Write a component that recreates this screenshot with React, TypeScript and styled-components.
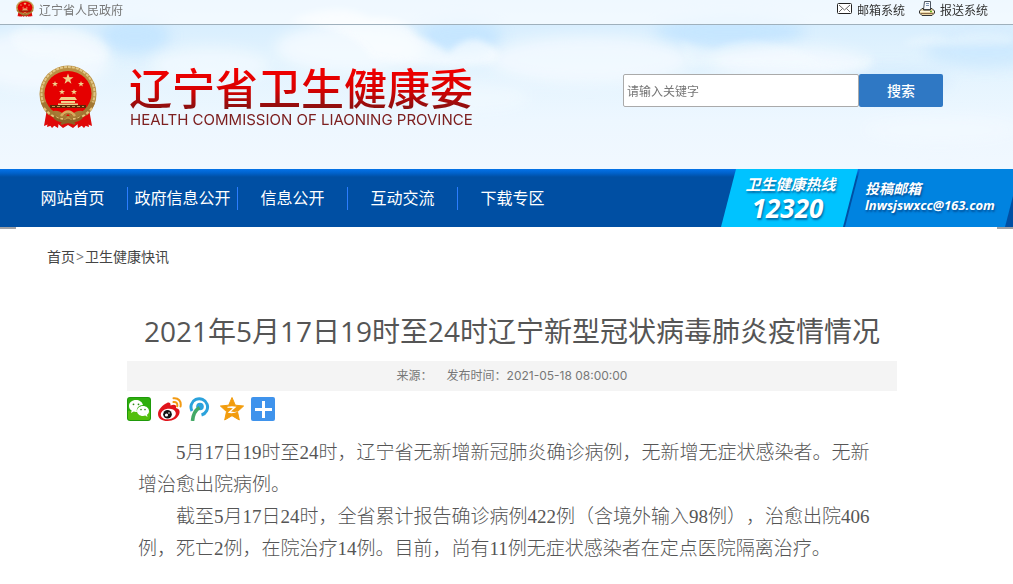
import React from "react";
import styled, { createGlobalStyle } from "styled-components";

const GlobalStyle = createGlobalStyle`
  *, *::before, *::after { box-sizing: border-box; }
  body {
    margin: 0;
    background: #fff;
    color: #444;
    font-family: "Open Sans", "Noto Sans CJK SC", sans-serif;
    font-size: 12px;
    text-spacing-trim: space-all;
  }
  a { color: inherit; text-decoration: none; }
`;

const Header = styled.header`
  position: relative;
  isolation: isolate;
  background: linear-gradient(#d2ebfe 0, #e2f3fe 60px, #edf7ff 120px, #f1f8ff 100%);
`;

const Sky = styled.svg`
  position: absolute;
  inset: 0;
  width: 100%;
  height: 100%;
  z-index: -1;
`;

const TopBar = styled.div`
  display: flex;
  justify-content: space-between;
  height: 25px;
  padding: 0 25px 0 16px;
  border-bottom: 1px solid #9fb0bc;
  background: rgba(255, 255, 255, 0.65);
`;

const TopGroup = styled.div`
  display: flex;
  gap: 14px;
`;

const TopLink = styled.a<{ $tone?: string }>`
  display: flex;
  gap: 5px;
  height: 22px;
  line-height: 22px;
  color: ${(p) => p.$tone || "#333"};
`;

const IconBox = styled.span<{ $top: number }>`
  display: flex;
  align-items: flex-start;
  padding-top: ${(p) => p.$top}px;
`;

const Masthead = styled.div`
  display: flex;
  justify-content: space-between;
  align-items: flex-start;
  height: 144px;
  padding: 40px 70px 0 39px;
`;

const Brand = styled.a`
  display: flex;
  gap: 32px;
`;

const BrandText = styled.span`
  display: flex;
  flex-direction: column;
`;

const BrandName = styled.span`
  font-size: 43px;
  line-height: 48px;
  font-weight: 500;
  color: transparent;
  background: linear-gradient(#f00000 10%, #d90000 50%, #8a1010 90%);
  background-clip: text;
  -webkit-background-clip: text;
`;

const BrandSub = styled.span`
  font-family: Inter, "Liberation Sans", sans-serif;
  padding-left: 1px;
  font-size: 15px;
  line-height: 14px;
  color: #7d2020;
`;

const SearchForm = styled.form`
  display: flex;
  margin-top: 9px;
`;

const SearchInput = styled.input`
  width: 236px;
  height: 33px;
  padding: 2px 3px 0;
  border: 1px solid #aaa;
  border-radius: 2px;
  background: #fff;
  font: inherit;
  color: #333;
  &::placeholder { color: #757575; opacity: 1; }
`;

const SearchButton = styled.button`
  width: 84px;
  height: 33px;
  padding: 0 0 2px;
  border: 0;
  border-radius: 2px;
  background: #2f78c4;
  color: #fff;
  font: inherit;
  font-size: 14px;
  font-weight: 500;
`;

const NavBar = styled.nav`
  display: flex;
  justify-content: space-between;
  height: 58px;
  padding-left: 17px;
  overflow: hidden;
  background: linear-gradient(#0573e8 0, #0062cc 4px, #004fa3 8px, #004fa3 100%);
`;

const NavList = styled.ul`
  display: flex;
  align-items: center;
  margin: 0;
  padding: 0;
  list-style: none;
`;

const NavItem = styled.li`
  width: 110px;
  height: 23px;
  border-left: 1px solid #2b7dff;
  line-height: 23px;
  font-size: 16px;
  text-align: center;
  white-space: nowrap;
  color: #fff;
  &:first-child { border-left-color: transparent; }
`;

const Contacts = styled.div`
  display: flex;
  margin-right: -7px;
  color: #fff;
  font-weight: 700;
  font-style: italic;
  white-space: nowrap;
  text-shadow: 1px 2px 2px rgba(0, 50, 110, 0.6);
`;

const Slant = styled.div<{ $bg: string; $width: number }>`
  display: flex;
  flex-direction: column;
  width: ${(p) => p.$width}px;
  background: ${(p) => p.$bg};
  clip-path: polygon(15px 0, 100% 0, calc(100% - 15px) 100%, 0 100%);
`;

const Hotline = styled(Slant)`
  padding: 5px 4px 0 0;
  align-items: center;
`;

const Mailbox = styled(Slant)`
  margin-left: -13px;
  padding: 11px 0 0 20px;
`;

const HotlineLabel = styled.span`
  padding-left: 6px;
  font-size: 15px;
  line-height: 20px;
`;

const HotlineNumber = styled.span`
  font-size: 26px;
  line-height: 28px;
`;

const MailLine = styled.span<{ $size: number }>`
  font-size: ${(p) => p.$size}px;
  line-height: 17px;
`;

const NavEdge = styled.div`
  display: flex;
  justify-content: space-between;
  height: 2px;
  &::before, &::after {
    content: "";
    width: 16px;
    background: #a0a2a6;
  }
`;

const Page = styled.main`
  padding: 18px 5px 16px 16px;
`;

const Breadcrumb = styled.nav`
  padding-left: 31px;
  font-size: 14px;
  line-height: 20px;
`;

const Crumb = styled.span`
  padding: 0 1px;
  color: #777;
`;

const Article = styled.article`
  max-width: 770px;
  margin: 44px auto 0;
`;

const Title = styled.h1`
  margin: 0 0 10px;
  font-size: 28px;
  font-weight: 400;
  line-height: 40px;
  text-align: center;
  color: #555;
`;

const Meta = styled.div`
  display: flex;
  justify-content: center;
  gap: 14px;
  background: #f4f4f4;
  color: #777;
  font-family: Inter, "Noto Sans CJK SC", sans-serif;
  line-height: 30px;
`;

const Share = styled.div`
  display: flex;
  gap: 7px;
  margin: 6px 0 16px;
`;

const ShareLink = styled.a`
  display: flex;
  width: 24px;
  height: 24px;
`;

const Paragraph = styled.p`
  margin: 0;
  padding: 0 11px;
  font-family: "Liberation Serif", "Noto Sans CJK SC", serif;
  font-size: 19px;
  font-weight: 300;
  line-height: 32px;
  text-indent: 2em;
  color: #555;
`;

function Emblem({ width, height }: { width: number; height: number }) {
  const star = "M0-5 1.3-1.6 5-1.6 2 .7 3.1 4.3 0 2.1-3.1 4.3-2 .7-5-1.6-1.3-1.6Z";
  return (
    <svg width={width} height={height} viewBox="0 0 58 64" preserveAspectRatio="none" aria-hidden="true">
      <path d="M8 44 5 61 10 59 13 63 18 58 24 63 29 60 34 63 40 58 45 63 48 59 53 61 50 44Z" fill="#de0a0a" />
      <ellipse cx="29" cy="29" rx="28.5" ry="28.5" fill="#b99045" />
      <ellipse cx="29" cy="28.5" rx="26.5" ry="26.5" fill="none" stroke="#e2c684" strokeWidth="2" strokeDasharray="3 1" />
      <path d="M2 38Q9 55 24 56L29 51 34 56Q49 55 56 38L48 36H10Z" fill="#a27732" />
      <path d="M5 43Q14 54 24 54M53 43Q44 54 34 54" stroke="#e5c37a" strokeWidth="2" strokeDasharray="3 2" fill="none" />
      <ellipse cx="29" cy="28.5" rx="23.5" ry="22.5" fill="#e50000" />
      <g fill="#f0d18b">
        <path d={star} transform="translate(29 14) scale(1.1)" />
        <path d={star} transform="translate(16 19) scale(.6)" />
        <path d={star} transform="translate(42 19) scale(.6)" />
        <path d={star} transform="translate(23 27) scale(.6)" />
        <path d={star} transform="translate(35 27) scale(.6)" />
        <path d="M22 32H36L38 35H20ZM22 36H36V38H22ZM19 38.5H39V40H19Z" />
      </g>
      <path d="M11 40H47V43H11Z" fill="#5d2608" />
      <path d="M13 41.5H45" stroke="#c49a4c" strokeDasharray="3 2" />
      <path d="M14 46Q21 45 25 50 29 43 33 50 37 45 44 46L38 52 33 53 29 49 25 53 20 52Z" fill="#a77b36" />
      <path d="M22 51Q29 42 36 51" fill="none" stroke="#d6ac5e" strokeWidth="2.5" />
      <path d="M10 50 20 56 19 63 14 60 8 62ZM48 50 38 56 39 63 44 60 50 62Z" fill="#e00808" />
      <path d="M15 52Q21 58 29 55 37 58 43 52M22 59Q29 55 36 59" stroke="#8d6325" strokeWidth="2.5" fill="none" />
    </svg>
  );
}

function Clouds() {
  return (
    <Sky viewBox="0 0 1013 169" preserveAspectRatio="xMidYMin slice" aria-hidden="true">
      <defs>
        <filter id="soft" x="-30%" y="-30%" width="160%" height="160%">
          <feGaussianBlur stdDeviation="7" />
        </filter>
        <filter id="edge" x="-30%" y="-30%" width="160%" height="160%">
          <feGaussianBlur stdDeviation="3" />
        </filter>
      </defs>
      <g fill="#bfe3ff" filter="url(#soft)" opacity=".75">
        <ellipse cx="135" cy="36" rx="35" ry="18" />
        <ellipse cx="460" cy="36" rx="42" ry="17" />
        <ellipse cx="730" cy="32" rx="75" ry="16" />
        <ellipse cx="985" cy="52" rx="60" ry="16" opacity=".7" />
        <ellipse cx="890" cy="80" rx="60" ry="14" opacity=".5" />
      </g>
      <g fill="#f6fbff" filter="url(#soft)">
        <ellipse cx="40" cy="60" rx="70" ry="30" opacity=".7" />
        <ellipse cx="210" cy="65" rx="60" ry="18" opacity=".6" />
        <ellipse cx="350" cy="48" rx="75" ry="24" opacity=".8" />
        <ellipse cx="590" cy="60" rx="100" ry="24" opacity=".7" />
        <ellipse cx="790" cy="62" rx="80" ry="16" opacity=".7" />
        <ellipse cx="470" cy="98" rx="60" ry="14" opacity=".5" />
        <ellipse cx="940" cy="130" rx="80" ry="14" opacity=".5" />
      </g>
      <g fill="#fafdff" filter="url(#edge)" opacity=".65">
        <path d="M10 35Q28 20 45 30 70 22 90 35 112 42 108 58 80 70 50 58 18 62 10 35Z" opacity=".6" />
        <path d="M290 20Q340 0 370 18 405 15 416 36 440 45 448 54 470 28 494 48 506 55 490 64 440 70 370 58 360 32 290 20Z" />
        <path d="M680 40Q700 48 716 50 745 36 770 44 800 48 820 60 840 66 870 56 880 68 850 72 760 62 690 66Z" opacity=".5" />
        <path d="M900 44Q930 30 950 38 980 28 1013 36V44Q970 48 900 44Z" opacity=".5" />
      </g>
    </Sky>
  );
}

function MailIcon() {
  return (
    <svg width="15" height="11" viewBox="0 0 15 11" fill="none" aria-hidden="true">
      <rect x=".5" y=".5" width="14" height="10" rx="1" fill="#fff" stroke="#222" />
      <path d="M2 2 7.5 7 13 2M2 9 5.5 5.5M13 9 9.5 5.5" stroke="#666" />
    </svg>
  );
}

function PrinterIcon() {
  return (
    <svg width="16" height="15" viewBox="0 0 16 15" aria-hidden="true">
      <path d="M5.5.5H11.5V8.5H4.5Z" fill="#f6f9fd" stroke="#4d5661" />
      <path d="M7 2.5H10M7 4.5H10" stroke="#7b92b0" />
      <path d="M3 7.5H4.5V9H11.5V7.5H13L15.5 10V12L13 14.5H3L.5 12V10Z" fill="#ead7a6" stroke="#333" />
      <path d="M1 10.5H15" stroke="#fff8e0" />
      <path d="M2 12.5H14" stroke="#8c6a48" />
      <path d="M11 10.5H13" stroke="#5fae19" strokeWidth="1.6" />
    </svg>
  );
}

function WechatIcon() {
  return (
    <svg width="24" height="24" viewBox="0 0 24 24" aria-hidden="true">
      <rect width="24" height="24" rx="3" fill="#1f9a0a" />
      <rect x="1" y="1" width="22" height="22" rx="2" fill="#2fae0e" />
      <path d="M1 14H23V21Q23 23 21 23H3Q1 23 1 21Z" fill="#54bf0d" />
      <path d="M9 3C5 3 2 5.500 2 9c0 2 1 3.500 2.700 4.600L4 16l2.700-1.400q1.500.5 3.300.3C9 11 12 8 16 8 15.300 5 12.500 3 9 3Z" fill="#fff" />
      <path d="M16 9C12.500 9 10 11.200 10 14s2.600 5 6 5q1.200 0 2.300-.4L20.500 20l-.5-2.200C21.300 17 22 15.600 22 14 22 11.200 19.400 9 16 9Z" fill="#fff" />
      <g fill="#2d8a16">
        <circle cx="6.500" cy="7.300" r=".9" /><circle cx="11.500" cy="7.300" r=".9" />
        <circle cx="14" cy="12.600" r=".8" /><circle cx="18" cy="12.600" r=".8" />
      </g>
    </svg>
  );
}

function WeiboIcon() {
  return (
    <svg width="24" height="24" viewBox="0 0 24 24" aria-hidden="true">
      <path d="M9 6C11 5 13 6 12.500 8.500 16 7 19 7.500 18 11 21 11.500 22 13.500 21.500 16 20.500 21 15 24 9.500 24 4 24 0 21.500 0 17 0 12.500 5 7.500 9 6Z" fill="#e0141b" />
      <ellipse cx="10.300" cy="17" rx="7.600" ry="5.300" fill="#fff" transform="rotate(-8 10.300 17)" />
      <circle cx="9.500" cy="17.300" r="4.300" fill="#111" />
      <circle cx="8.500" cy="18" r="1.600" fill="#fff" />
      <circle cx="11" cy="16" r=".8" fill="#fff" />
      <path d="M15.500 1.200C20.500.6 23.600 4.500 22.500 9.500M15.500 5C18.300 4.600 19.800 6.600 19.200 9.300" fill="none" stroke="#f29a13" strokeWidth="2" strokeLinecap="round" />
    </svg>
  );
}

function TencentIcon() {
  return (
    <svg width="24" height="24" viewBox="0 0 24 24" fill="none" aria-hidden="true">
      <path d="M3 14A8.300 8.300 0 1 1 12.500 18" stroke="#2ba2dc" strokeWidth="3" />
      <circle cx="11" cy="9.500" r="3.800" fill="#2ba2dc" />
      <path d="M10.500 10.500C6.500 13 4 17.500 3.500 24" stroke="#43a866" strokeWidth="3.600" />
    </svg>
  );
}

function QzoneIcon() {
  return (
    <svg width="24" height="24" viewBox="0 0 24 24" aria-hidden="true">
      <path d="M12 .5 15.300 8.200 23.600 9 17.500 14.600 19.300 23 12 18.700 4.700 23 6.500 14.600.4 9 8.700 8.200Z" fill="#f29c0d" stroke="#f29c0d" strokeLinejoin="round" />
      <path d="M7.500 9.800Q12 8.800 16.500 9.800L11 14.600Q14 15.300 18 14.600 13 17.200 7.700 15.800L12.800 11.300Q10 10.600 7.500 10.900Z" fill="#fff" />
    </svg>
  );
}

function MoreIcon() {
  return (
    <svg width="24" height="24" viewBox="0 0 24 24" aria-hidden="true">
      <rect width="24" height="24" rx="2" fill="#3f93ec" />
      <path d="M12.500 4V11M12.500 14V21M4 12.500H11M14 12.500H21M11 12.500H14" stroke="#fff" strokeWidth="3" />
    </svg>
  );
}

const navItems = ["网站首页", "政府信息公开", "信息公开", "互动交流", "下载专区"];

const shareItems = [
  { label: "微信", Icon: WechatIcon },
  { label: "新浪微博", Icon: WeiboIcon },
  { label: "腾讯微博", Icon: TencentIcon },
  { label: "QQ空间", Icon: QzoneIcon },
  { label: "更多", Icon: MoreIcon },
];

export default function App() {
  return (
    <div lang="zh-CN">
      <GlobalStyle />
      <Header>
        <Clouds />
        <TopBar>
          <TopLink href="#" $tone="#777">
            <IconBox $top={0}><Emblem width={18} height={17} /></IconBox>
            辽宁省人民政府
          </TopLink>
          <TopGroup>
            <TopLink href="#"><IconBox $top={3}><MailIcon /></IconBox>邮箱系统</TopLink>
            <TopLink href="#"><IconBox $top={1}><PrinterIcon /></IconBox>报送系统</TopLink>
          </TopGroup>
        </TopBar>
        <Masthead>
          <Brand href="#">
            <Emblem width={58} height={64} />
            <BrandText>
              <BrandName>辽宁省卫生健康委</BrandName>
              <BrandSub>HEALTH COMMISSION OF LIAONING PROVINCE</BrandSub>
            </BrandText>
          </Brand>
          <SearchForm role="search" onSubmit={(e) => e.preventDefault()}>
            <SearchInput type="text" aria-label="请输入关键字" placeholder="请输入关键字" />
            <SearchButton type="submit">搜索</SearchButton>
          </SearchForm>
        </Masthead>
      </Header>
      <NavBar>
        <NavList>
          {navItems.map((name) => (
            <NavItem key={name}><a href="#">{name}</a></NavItem>
          ))}
        </NavList>
        <Contacts>
          <Hotline $bg="#00c3ff" $width={137}>
            <HotlineLabel>卫生健康热线</HotlineLabel>
            <HotlineNumber>12320</HotlineNumber>
          </Hotline>
          <Mailbox $bg="#0083e0" $width={175}>
            <MailLine $size={14}>投稿邮箱</MailLine>
            <MailLine $size={13}>lnwsjswxcc@163.com</MailLine>
          </Mailbox>
        </Contacts>
      </NavBar>
      <NavEdge />
      <Page>
        <Breadcrumb aria-label="当前位置">
          <a href="#">首页</a><Crumb>&gt;</Crumb><a href="#">卫生健康快讯</a>
        </Breadcrumb>
        <Article>
          <Title>2021年5月17日19时至24时辽宁新型冠状病毒肺炎疫情情况</Title>
          <Meta>
            <span>来源：</span>
            <span>发布时间：2021-05-18 08:00:00</span>
          </Meta>
          <Share>
            {shareItems.map(({ label, Icon }) => (
              <ShareLink key={label} href="#" aria-label={label}><Icon /></ShareLink>
            ))}
          </Share>
          <Paragraph>
            5月17日19时至24时，辽宁省无新增新冠肺炎确诊病例，无新增无症状感染者。无新增治愈出院病例。
          </Paragraph>
          <Paragraph>
            截至5月17日24时，全省累计报告确诊病例422例（含境外输入98例），治愈出院406例，死亡2例，在院治疗14例。目前，尚有11例无症状感染者在定点医院隔离治疗。
          </Paragraph>
        </Article>
      </Page>
    </div>
  );
}
